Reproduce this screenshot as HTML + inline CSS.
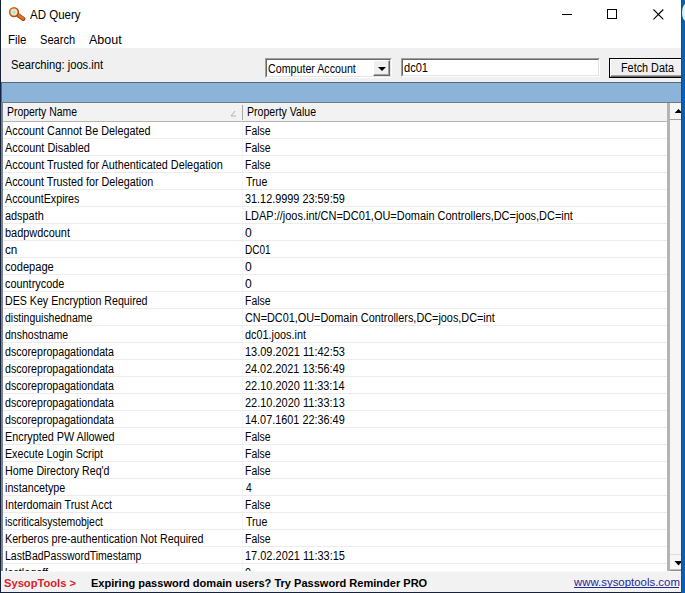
<!DOCTYPE html>
<html><head><meta charset="utf-8"><title>AD Query</title>
<style>
html,body{margin:0;padding:0;}
body{width:685px;height:593px;overflow:hidden;background:#fff;position:relative;font-family:"Liberation Sans",sans-serif;color:#000;}
.abs{position:absolute;}
.t{position:absolute;display:block;white-space:nowrap;line-height:14px;transform-origin:0 0;}
#lborder{left:0;top:0;width:1px;height:593px;background:#16223a;}
#bborder{left:0;top:592px;width:681px;height:1px;background:#16223a;}
#rstrip{left:681px;top:0;width:4px;height:593px;background:#0b60b5;}
#toolbar{left:1px;top:48px;width:680px;height:34px;background:#f0f0f0;}
#combo_b{left:265px;top:58px;width:127px;height:20px;box-sizing:border-box;background:#fff;border:1px solid;border-color:#a0a0a0 #fff #fff #a0a0a0;}
#combo_b .in{position:absolute;left:0;top:0;right:0;bottom:0;border:1px solid;border-color:#696969 #e3e3e3 #e3e3e3 #696969;}
#combo_b .btn{position:absolute;right:0;top:0;width:17px;height:16px;box-sizing:border-box;background:#f0f0f0;border:1px solid;border-color:#fff #696969 #696969 #fff;box-shadow:inset -1px -1px 0 #a0a0a0;}
#combo_b .btn:after{content:"";position:absolute;left:3.5px;top:5.5px;border:4px solid transparent;border-top-color:#000;border-bottom:0;}
#tbox{left:401px;top:58px;width:199px;height:19px;box-sizing:border-box;background:#fff;border:1px solid;border-color:#a0a0a0 #fff #fff #a0a0a0;}
#tbox .in{position:absolute;left:0;top:0;right:0;bottom:0;border:1px solid;border-color:#696969 #e3e3e3 #e3e3e3 #696969;}
#fbtn{left:609px;top:58px;width:77px;height:20px;box-sizing:border-box;background:#f0f0f0;border:1px solid #000;}
#fbtn .in{position:absolute;left:0;top:0;right:0;bottom:0;border:1px solid;border-color:#fff #696969 #696969 #fff;box-shadow:inset -1px -1px 0 #a0a0a0;}
#band{left:1px;top:82px;width:680px;height:20px;background:#8cb4d8;border-top:1px solid #56697c;border-left:1px solid #56697c;box-sizing:border-box;}
#list{left:1px;top:102px;width:680px;height:469px;background:#fff;box-sizing:border-box;border-left:2px solid #7a8590;border-top:1px solid #6e7a86;}
#hdr{left:3px;top:103px;width:664px;height:19px;background:#f2f2f2;border-bottom:1px solid #b4b4b4;box-sizing:border-box;}
#hsep{left:242px;top:105px;width:1px;height:15px;background:#a8a8a8;}
.gl{position:absolute;left:3px;width:664px;height:1px;background:#ececec;}
#vgl{left:242px;top:122px;width:1px;height:450px;background:#f5f5f5;}
#sbgap{left:667px;top:103px;width:3px;height:468px;background:#b4b4b4;}
#sb{left:670px;top:103px;width:11px;height:468px;background:#f6f6f6;}
#status{left:1px;top:571px;width:680px;height:21px;background:#f2f2f2;border-top:1px solid #fafafa;box-sizing:border-box;}
</style></head><body>
<svg class="abs" style="left:0;top:0" width="40" height="30" viewBox="0 0 40 30">
<defs><radialGradient id="lens" cx="0.5" cy="0.52" r="0.55"><stop offset="0" stop-color="#8fd2f4"/><stop offset="0.5" stop-color="#e6efc8"/><stop offset="0.85" stop-color="#f4c67a"/><stop offset="1" stop-color="#ee9a5c"/></radialGradient>
<linearGradient id="ring" x1="0" y1="0" x2="1" y2="1"><stop offset="0" stop-color="#d07a2a"/><stop offset="0.5" stop-color="#b9541c"/><stop offset="1" stop-color="#a84416"/></linearGradient></defs>
<line x1="18.2" y1="15.3" x2="23.4" y2="18.9" stroke="#97430f" stroke-width="4.2" stroke-linecap="round"/>
<line x1="18.0" y1="15.0" x2="23.2" y2="18.6" stroke="#e8701f" stroke-width="2.6" stroke-linecap="round"/>
<circle cx="14" cy="12.1" r="4.4" fill="url(#lens)" stroke="url(#ring)" stroke-width="1.6"/>
</svg>
<span class="t" id="title" style="left:30.00px;top:8.00px;font-size:12px;transform:scaleX(0.9596);">AD Query</span>
<div class="abs" style="left:562px;top:14px;width:10px;height:1px;background:#000"></div>
<div class="abs" style="left:607px;top:9px;width:10px;height:10px;box-sizing:border-box;border:1px solid #000"></div>
<svg class="abs" style="left:653px;top:9px" width="11" height="11" viewBox="0 0 11 11"><path d="M0.5 0.5 L10.3 10.3 M10.3 0.5 L0.5 10.3" stroke="#000" stroke-width="1.1" fill="none"/></svg>
<span class="t" id="mFile" style="left:8.00px;top:33.00px;font-size:12px;transform:scaleX(0.9545);">File</span><span class="t" id="mSearch" style="left:40.00px;top:33.00px;font-size:12px;transform:scaleX(0.9245);">Search</span><span class="t" id="mAbout" style="left:89.00px;top:33.00px;font-size:12px;transform:scaleX(1.0431);">About</span>
<div class="abs" id="toolbar"></div>
<span class="t" id="searching" style="left:11.00px;top:57.80px;font-size:12px;transform:scaleX(0.9336);">Searching: joos.int</span>
<div class="abs" id="combo_b"><div class="in"><div class="btn"></div></div></div>
<span class="t" id="combo" style="left:268.00px;top:62.20px;font-size:12px;transform:scaleX(0.8896);">Computer Account</span>
<div class="abs" id="tbox"><div class="in"></div></div>
<span class="t" id="dc01" style="left:404.00px;top:61.00px;font-size:12px;transform:scaleX(0.9238);">dc01</span>
<div class="abs" id="fbtn"><div class="in"></div></div>
<span class="t" id="fetch" style="left:621.00px;top:61.00px;font-size:12px;transform:scaleX(0.9017);">Fetch Data</span>
<div class="abs" id="band"></div>
<div class="abs" id="list"></div>
<div class="abs" id="hdr"></div>
<div class="abs" id="hsep"></div>
<svg class="abs" style="left:228px;top:108px" width="10" height="10" viewBox="0 0 10 10"><path d="M7 3 L3 8 L8 8" stroke="#b0b0b0" stroke-width="1" fill="none"/></svg>
<span class="t" id="hName" style="left:7.00px;top:104.60px;font-size:12px;transform:scaleX(0.8668);">Property Name</span><span class="t" id="hValue" style="left:247.00px;top:104.60px;font-size:12px;transform:scaleX(0.8791);">Property Value</span>
<div class="abs" id="vgl"></div>
<div class="gl" style="top:138px"></div>
<div class="gl" style="top:155px"></div>
<div class="gl" style="top:172px"></div>
<div class="gl" style="top:189px"></div>
<div class="gl" style="top:206px"></div>
<div class="gl" style="top:223px"></div>
<div class="gl" style="top:240px"></div>
<div class="gl" style="top:257px"></div>
<div class="gl" style="top:274px"></div>
<div class="gl" style="top:291px"></div>
<div class="gl" style="top:308px"></div>
<div class="gl" style="top:325px"></div>
<div class="gl" style="top:342px"></div>
<div class="gl" style="top:359px"></div>
<div class="gl" style="top:376px"></div>
<div class="gl" style="top:393px"></div>
<div class="gl" style="top:410px"></div>
<div class="gl" style="top:427px"></div>
<div class="gl" style="top:444px"></div>
<div class="gl" style="top:461px"></div>
<div class="gl" style="top:478px"></div>
<div class="gl" style="top:495px"></div>
<div class="gl" style="top:512px"></div>
<div class="gl" style="top:529px"></div>
<div class="gl" style="top:546px"></div>
<div class="gl" style="top:563px"></div>
<span class="t" id="r0a" style="left:5.00px;top:123.70px;font-size:12px;transform:scaleX(0.9016);">Account Cannot Be Delegated</span><span class="t" id="r0b" style="left:245.00px;top:123.70px;font-size:12px;transform:scaleX(0.8704);">False</span>
<span class="t" id="r1a" style="left:5.00px;top:140.70px;font-size:12px;transform:scaleX(0.9085);">Account Disabled</span><span class="t" id="r1b" style="left:245.00px;top:140.70px;font-size:12px;transform:scaleX(0.8704);">False</span>
<span class="t" id="r2a" style="left:5.00px;top:157.70px;font-size:12px;transform:scaleX(0.9040);">Account Trusted for Authenticated Delegation</span><span class="t" id="r2b" style="left:245.00px;top:157.70px;font-size:12px;transform:scaleX(0.8704);">False</span>
<span class="t" id="r3a" style="left:5.00px;top:174.70px;font-size:12px;transform:scaleX(0.8993);">Account Trusted for Delegation</span><span class="t" id="r3b" style="left:246.00px;top:174.70px;font-size:12px;transform:scaleX(0.8778);">True</span>
<span class="t" id="r4a" style="left:5.00px;top:191.70px;font-size:12px;transform:scaleX(0.8922);">AccountExpires</span><span class="t" id="r4b" style="left:245.00px;top:191.70px;font-size:12px;transform:scaleX(0.9060);">31.12.9999 23:59:59</span>
<span class="t" id="r5a" style="left:5.00px;top:208.70px;font-size:12px;transform:scaleX(0.9071);">adspath</span><span class="t" id="r5b" style="left:245.00px;top:208.70px;font-size:12px;transform:scaleX(0.9139);">LDAP://joos.int/CN=DC01,OU=Domain Controllers,DC=joos,DC=int</span>
<span class="t" id="r6a" style="left:5.00px;top:225.70px;font-size:12px;transform:scaleX(0.9098);">badpwdcount</span><span class="t" id="r6b" style="left:245.00px;top:225.70px;font-size:12px;transform:scaleX(1.0094);">0</span>
<span class="t" id="r7a" style="left:5.00px;top:242.70px;font-size:12px;transform:scaleX(0.9745);">cn</span><span class="t" id="r7b" style="left:245.00px;top:242.70px;font-size:12px;transform:scaleX(0.8373);">DC01</span>
<span class="t" id="r8a" style="left:5.00px;top:259.70px;font-size:12px;transform:scaleX(0.9248);">codepage</span><span class="t" id="r8b" style="left:245.00px;top:259.70px;font-size:12px;transform:scaleX(1.0094);">0</span>
<span class="t" id="r9a" style="left:5.00px;top:276.70px;font-size:12px;transform:scaleX(0.9072);">countrycode</span><span class="t" id="r9b" style="left:245.00px;top:276.70px;font-size:12px;transform:scaleX(1.0094);">0</span>
<span class="t" id="r10a" style="left:5.00px;top:293.70px;font-size:12px;transform:scaleX(0.8867);">DES Key Encryption Required</span><span class="t" id="r10b" style="left:245.00px;top:293.70px;font-size:12px;transform:scaleX(0.8704);">False</span>
<span class="t" id="r11a" style="left:5.00px;top:310.70px;font-size:12px;transform:scaleX(0.8719);">distinguishedname</span><span class="t" id="r11b" style="left:245.00px;top:310.70px;font-size:12px;transform:scaleX(0.9049);">CN=DC01,OU=Domain Controllers,DC=joos,DC=int</span>
<span class="t" id="r12a" style="left:5.00px;top:327.70px;font-size:12px;transform:scaleX(0.8767);">dnshostname</span><span class="t" id="r12b" style="left:245.00px;top:327.70px;font-size:12px;transform:scaleX(0.9045);">dc01.joos.int</span>
<span class="t" id="r13a" style="left:5.00px;top:344.70px;font-size:12px;transform:scaleX(0.8874);">dscorepropagationdata</span><span class="t" id="r13b" style="left:245.00px;top:344.70px;font-size:12px;transform:scaleX(0.9150);">13.09.2021 11:42:53</span>
<span class="t" id="r14a" style="left:5.00px;top:361.70px;font-size:12px;transform:scaleX(0.8874);">dscorepropagationdata</span><span class="t" id="r14b" style="left:245.00px;top:361.70px;font-size:12px;transform:scaleX(0.9058);">24.02.2021 13:56:49</span>
<span class="t" id="r15a" style="left:5.00px;top:378.70px;font-size:12px;transform:scaleX(0.8874);">dscorepropagationdata</span><span class="t" id="r15b" style="left:245.00px;top:378.70px;font-size:12px;transform:scaleX(0.9118);">22.10.2020 11:33:14</span>
<span class="t" id="r16a" style="left:5.00px;top:395.70px;font-size:12px;transform:scaleX(0.8874);">dscorepropagationdata</span><span class="t" id="r16b" style="left:245.00px;top:395.70px;font-size:12px;transform:scaleX(0.9140);">22.10.2020 11:33:13</span>
<span class="t" id="r17a" style="left:5.00px;top:412.70px;font-size:12px;transform:scaleX(0.8874);">dscorepropagationdata</span><span class="t" id="r17b" style="left:245.00px;top:412.70px;font-size:12px;transform:scaleX(0.9055);">14.07.1601 22:36:49</span>
<span class="t" id="r18a" style="left:5.00px;top:429.70px;font-size:12px;transform:scaleX(0.9014);">Encrypted PW Allowed</span><span class="t" id="r18b" style="left:245.00px;top:429.70px;font-size:12px;transform:scaleX(0.8704);">False</span>
<span class="t" id="r19a" style="left:5.00px;top:446.70px;font-size:12px;transform:scaleX(0.8900);">Execute Login Script</span><span class="t" id="r19b" style="left:245.00px;top:446.70px;font-size:12px;transform:scaleX(0.8704);">False</span>
<span class="t" id="r20a" style="left:5.00px;top:463.70px;font-size:12px;transform:scaleX(0.8885);">Home Directory Req'd</span><span class="t" id="r20b" style="left:245.00px;top:463.70px;font-size:12px;transform:scaleX(0.8704);">False</span>
<span class="t" id="r21a" style="left:5.00px;top:480.70px;font-size:12px;transform:scaleX(0.8947);">instancetype</span><span class="t" id="r21b" style="left:246.00px;top:480.70px;font-size:12px;transform:scaleX(0.8573);">4</span>
<span class="t" id="r22a" style="left:5.00px;top:497.70px;font-size:12px;transform:scaleX(0.8964);">Interdomain Trust Acct</span><span class="t" id="r22b" style="left:245.00px;top:497.70px;font-size:12px;transform:scaleX(0.8704);">False</span>
<span class="t" id="r23a" style="left:5.00px;top:514.70px;font-size:12px;transform:scaleX(0.8697);">iscriticalsystemobject</span><span class="t" id="r23b" style="left:246.00px;top:514.70px;font-size:12px;transform:scaleX(0.8778);">True</span>
<span class="t" id="r24a" style="left:5.00px;top:531.70px;font-size:12px;transform:scaleX(0.8937);">Kerberos pre-authentication Not Required</span><span class="t" id="r24b" style="left:245.00px;top:531.70px;font-size:12px;transform:scaleX(0.8704);">False</span>
<span class="t" id="r25a" style="left:5.00px;top:548.70px;font-size:12px;transform:scaleX(0.8762);">LastBadPasswordTimestamp</span><span class="t" id="r25b" style="left:245.00px;top:548.70px;font-size:12px;transform:scaleX(0.9148);">17.02.2021 11:33:15</span>
<span class="t" id="r26a" style="left:5.00px;top:565.70px;font-size:12px;transform:scaleX(0.9000);">lastlogoff</span><span class="t" id="r26b" style="left:245.00px;top:565.70px;font-size:12px;transform:scaleX(0.8900);">0</span>
<div class="abs" id="sbgap"></div>
<div class="abs" id="sb"></div>
<div class="abs" style="left:670px;top:119px;width:11px;height:1px;background:#a0a0a0"></div>
<svg class="abs" style="left:670px;top:103px" width="15" height="468" viewBox="0 0 15 468">
<path d="M4.7 10 L8.5 6 L12.3 10 Z" fill="#000"/>
<rect x="0" y="451" width="11" height="1" fill="#dcdcdc"/>
<rect x="0" y="466.5" width="11" height="1.5" fill="#8c8c8c"/>
<path d="M4.5 458 L12.5 458 L8.5 462.5 Z" fill="#000"/>
</svg>
<div class="abs" id="status"></div>
<span class="t" id="sSys" style="left:4.00px;top:575.50px;font-size:11.5px;transform:scaleX(0.9704);color:#d6222e;font-weight:bold;">SysopTools &gt;</span><span class="t" id="sExp" style="left:91.00px;top:575.50px;font-size:11.5px;transform:scaleX(0.9600);font-weight:bold;">Expiring password domain users? Try Password Reminder PRO</span><span class="t" id="sUrl" style="left:574.00px;top:574.50px;font-size:11.5px;transform:scaleX(0.9921);color:#22289a;">www.sysoptools.com</span>
<div class="abs" style="left:574px;top:587px;width:105px;height:1px;background:#22289a"></div>
<div class="abs" id="lborder"></div>
<div class="abs" id="bborder"></div>
<div class="abs" id="rstrip"></div>
<div class="abs" style="left:681px;top:0;width:1px;height:593px;background:#0a4c96"></div>
<div class="abs" style="left:682px;top:4px;width:8px;height:17px;border-radius:50%;background:#d9f3fb"></div>
</body></html>
